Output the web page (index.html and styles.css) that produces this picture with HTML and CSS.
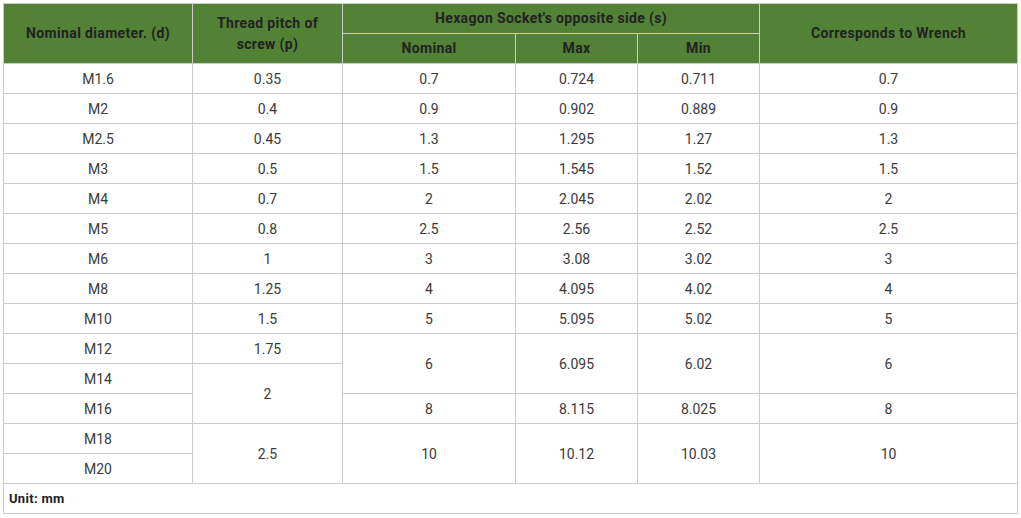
FILE: index.html
```html
<!DOCTYPE html>
<html>
<head>
<meta charset="utf-8">
<link rel="stylesheet" href="styles.css">
</head>
<body>
<div class="wrap">
<table class="spec">
  <colgroup>
    <col class="c1"><col class="c2"><col class="c3"><col class="c4"><col class="c5"><col class="c6">
  </colgroup>
  <thead>
    <tr>
      <th rowspan="2">Nominal diameter. (d)</th>
      <th rowspan="2">Thread pitch of<br>screw (p)</th>
      <th colspan="3">Hexagon Socket's opposite side (s)</th>
      <th rowspan="2">Corresponds to Wrench</th>
    </tr>
    <tr>
      <th>Nominal</th>
      <th>Max</th>
      <th>Min</th>
    </tr>
  </thead>
  <tbody>
    <tr><td>M1.6</td><td>0.35</td><td>0.7</td><td>0.724</td><td>0.711</td><td>0.7</td></tr>
    <tr><td>M2</td><td>0.4</td><td>0.9</td><td>0.902</td><td>0.889</td><td>0.9</td></tr>
    <tr><td>M2.5</td><td>0.45</td><td>1.3</td><td>1.295</td><td>1.27</td><td>1.3</td></tr>
    <tr><td>M3</td><td>0.5</td><td>1.5</td><td>1.545</td><td>1.52</td><td>1.5</td></tr>
    <tr><td>M4</td><td>0.7</td><td>2</td><td>2.045</td><td>2.02</td><td>2</td></tr>
    <tr><td>M5</td><td>0.8</td><td>2.5</td><td>2.56</td><td>2.52</td><td>2.5</td></tr>
    <tr><td>M6</td><td>1</td><td>3</td><td>3.08</td><td>3.02</td><td>3</td></tr>
    <tr><td>M8</td><td>1.25</td><td>4</td><td>4.095</td><td>4.02</td><td>4</td></tr>
    <tr><td>M10</td><td>1.5</td><td>5</td><td>5.095</td><td>5.02</td><td>5</td></tr>
    <tr><td>M12</td><td>1.75</td><td rowspan="2">6</td><td rowspan="2">6.095</td><td rowspan="2">6.02</td><td rowspan="2">6</td></tr>
    <tr><td>M14</td><td rowspan="2">2</td></tr>
    <tr><td>M16</td><td>8</td><td>8.115</td><td>8.025</td><td>8</td></tr>
    <tr><td>M18</td><td rowspan="2">2.5</td><td rowspan="2">10</td><td rowspan="2">10.12</td><td rowspan="2">10.03</td><td rowspan="2">10</td></tr>
    <tr><td>M20</td></tr>
    <tr><td colspan="6" class="unit">Unit: mm</td></tr>
  </tbody>
</table>
</div>
</body>
</html>
```
FILE: styles.css
```css
html, body {
  margin: 0;
  padding: 0;
  background: #fff;
}
.wrap {
  padding: 3px 3px 0 3px;
}
.spec {
  border-collapse: collapse;
  table-layout: fixed;
  width: 1015px;
  font-family: Roboto, "Liberation Sans", Arial, sans-serif;
  font-size: 14px;
  color: #3a3a3a;
}
.c1 { width: 189px; }
.c2 { width: 150px; }
.c3 { width: 173px; }
.c4 { width: 122px; }
.c5 { width: 122px; }
.c6 { width: 258px; }
.spec th, .spec td {
  border: 1px solid #ccc;
  text-align: center;
  vertical-align: middle;
  padding: 0 5px;
  height: 29px;
  line-height: 21px;
}
.spec td {
  padding-top: 2px;
  height: 27px;
}
.spec th {
  background: #538135;
  color: #222;
  font-weight: bold;
  letter-spacing: 0.35px;
}
.spec td.unit {
  text-align: left;
  font-weight: bold;
  color: #222;
  font-size: 13px;
  letter-spacing: 0.3px;
  padding-top: 0;
  height: 29px;
  padding-left: 5px;
}
```
